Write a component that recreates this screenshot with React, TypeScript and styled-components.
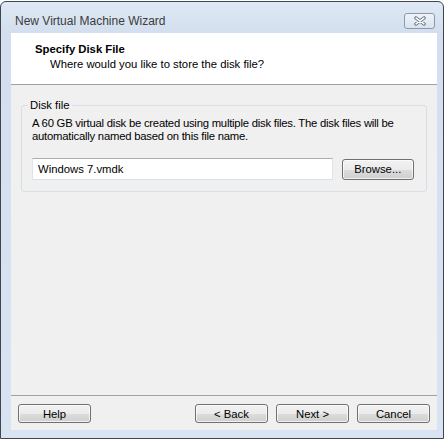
import React from 'react';
import styled, { createGlobalStyle } from 'styled-components';

const GlobalStyle = createGlobalStyle`
  html, body {
    margin: 0;
    padding: 0;
    background: #ffffff;
  }
  body {
    font-family: "Liberation Sans", Arial, sans-serif;
    font-size: 11.3px;
    color: #000;
  }
`;

const Window = styled.div`
  box-sizing: border-box;
  margin-top: 1px;
  width: 444px;
  height: 438px;
  border: 1px solid #3f4650;
  border-radius: 6px 6px 0 0;
  background: linear-gradient(to bottom, #dfe9f5 0px, #d3dfee 30px, #d8e4f2 100%);
  padding: 0 6px 8px 10px;
  display: flex;
  flex-direction: column;
`;

const TitleBar = styled.div`
  box-sizing: border-box;
  height: 31px;
  padding: 7px 2px 0 4px;
  display: flex;
  align-items: center;
  justify-content: space-between;
`;

const TitleText = styled.span`
  font-size: 12px;
  color: #3c3c3c;
`;

const CloseButton = styled.div`
  box-sizing: border-box;
  width: 31px;
  height: 16px;
  border: 1px solid #8e99a8;
  border-radius: 3px;
  background: linear-gradient(to bottom, #eef3f9, #d9e3ef);
  display: flex;
  align-items: center;
  justify-content: center;
`;

const Client = styled.div`
  flex: 1;
  background: #f0f0f0;
  display: flex;
  flex-direction: column;
`;

const Header = styled.div`
  box-sizing: border-box;
  height: 52px;
  background: #ffffff;
  border-bottom: 1px solid #a0a0a0;
  padding: 9px 0 0 24px;
`;

const HeaderTitle = styled.div`
  font-weight: bold;
  line-height: 15px;
`;

const HeaderSub = styled.div`
  line-height: 15px;
  padding-left: 15px;
`;

const Body = styled.div`
  flex: 1;
  padding: 13px 10px 0 10px;
`;

const Group = styled.fieldset`
  margin: 0;
  min-width: 0;
  border: 1px solid #d5dfe5;
  border-radius: 3px;
  padding: 5px 12px 11px 10px;
`;

const Legend = styled.legend`
  padding: 0 2px;
  margin-left: -4px;
  line-height: 14px;
`;

const Description = styled.p`
  margin: 0;
  line-height: 13px;
  letter-spacing: -0.23px;
  white-space: nowrap;
`;

const FileRow = styled.div`
  display: flex;
  align-items: center;
  gap: 9px;
  margin-top: 15px;
`;

const TextBox = styled.div`
  box-sizing: border-box;
  width: 303px;
  height: 22px;
  background: #fff;
  border: 1px solid #dbdfe6;
  border-top-color: #abadb3;
  border-left-color: #e2e3ea;
  border-right-color: #e2e3ea;
  padding-left: 5px;
  display: flex;
  align-items: center;
`;

const Button = styled.button<{ $tall?: boolean }>`
  box-sizing: border-box;
  width: 73px;
  height: ${p => (p.$tall ? 21 : 19)}px;
  padding: 0;
  border: 1px solid #707070;
  border-radius: 3px;
  background: linear-gradient(to bottom, #f2f2f2 0%, #ebebeb 50%, #dddddd 51%, #cfcfcf 100%);
  box-shadow: inset 0 0 0 1px rgba(255, 255, 255, 0.7);
  font-family: "Liberation Sans", Arial, sans-serif;
  font-size: 11.3px;
  color: #000;
`;

const Footer = styled.div`
  border-top: 1px solid #a0a0a0;
  padding: 8px 7px 7px 7px;
  display: flex;
  align-items: center;
`;

const Spacer = styled.div`
  flex: 1;
`;

const NavButtons = styled.div`
  display: flex;
  gap: 8px;
`;

const CloseGlyph = () => (
  <svg width="14" height="10" viewBox="0 0 14 10">
    <path d="M3 2 L11 8 M11 2 L3 8" stroke="#4a5564" strokeWidth="3.2" strokeLinecap="round" />
    <path d="M3 2 L11 8 M11 2 L3 8" stroke="#ffffff" strokeWidth="1.6" strokeLinecap="round" />
  </svg>
);

export default function App() {
  return (
    <>
      <GlobalStyle />
      <Window>
        <TitleBar>
          <TitleText>New Virtual Machine Wizard</TitleText>
          <CloseButton>
            <CloseGlyph />
          </CloseButton>
        </TitleBar>
        <Client>
          <Header>
            <HeaderTitle>Specify Disk File</HeaderTitle>
            <HeaderSub>Where would you like to store the disk file?</HeaderSub>
          </Header>
          <Body>
            <Group>
              <Legend>Disk file</Legend>
              <Description>
                A 60 GB virtual disk be created using multiple disk files. The disk files will be
                <br />
                automatically named based on this file name.
              </Description>
              <FileRow>
                <TextBox>Windows 7.vmdk</TextBox>
                <Button $tall>Browse...</Button>
              </FileRow>
            </Group>
          </Body>
          <Footer>
            <Button>Help</Button>
            <Spacer />
            <NavButtons>
              <Button>&lt; Back</Button>
              <Button>Next &gt;</Button>
              <Button>Cancel</Button>
            </NavButtons>
          </Footer>
        </Client>
      </Window>
    </>
  );
}
